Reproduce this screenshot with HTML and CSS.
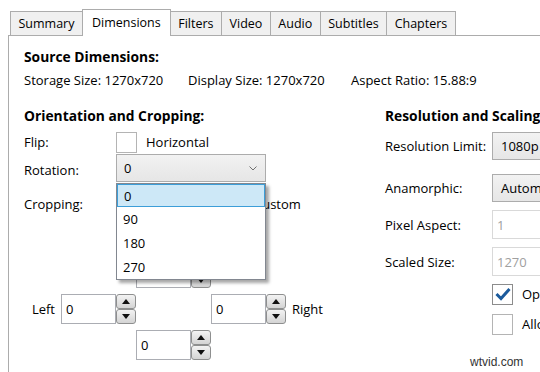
FILE: index.html
```html
<!DOCTYPE html>
<html lang="en">

<head>
  <meta charset="UTF-8">
  <title>Dimensions</title>
  <link rel="stylesheet" href="styles.css">
</head>

<body>
  <div class="tabs">
    <div class="tab">Summary</div>
    <div class="tab active">Dimensions</div>
    <div class="tab">Filters</div>
    <div class="tab">Video</div>
    <div class="tab">Audio</div>
    <div class="tab">Subtitles</div>
    <div class="tab">Chapters</div>
  </div>

  <div class="panel">
    <h2>Source Dimensions:</h2>
    <div class="source-row">
      <span class="storage">Storage Size: 1270x720</span>
      <span class="display">Display Size: 1270x720</span>
      <span>Aspect Ratio: 15.88:9</span>
    </div>

    <div class="columns">
      <div class="col-left">
        <h2>Orientation and Cropping:</h2>
        <div class="row flip-row">
          <span class="label">Flip:</span>
          <span class="check"></span>
          <span>Horizontal</span>
        </div>
        <div class="row rotation-row">
          <span class="label">Rotation:</span>
          <div class="select-wrap">
            <div class="select rotation">
              <span>0</span>
              <svg class="chevron" width="8" height="5" viewBox="0 0 8 5"><polyline points="0.5,0.5 4,4 7.5,0.5" fill="none" stroke="#707070" stroke-width="1"/></svg>
            </div>
            <ul class="dropdown">
              <li class="current">0</li>
              <li>90</li>
              <li>180</li>
              <li>270</li>
            </ul>
          </div>
        </div>
        <div class="row crop-row">
          <span class="label">Cropping:</span>
          <span class="radio-opt first"><span class="radio"></span>Automatic</span>
          <span class="radio-opt"><span class="radio"></span>Custom</span>
        </div>

        <div class="crop-grid">
          <div class="cell"></div>
          <div class="cell">
            <div class="spin"><input type="text" value="0"><div class="spin-btns"><button class="up"></button><button class="down"></button></div></div>
          </div>
          <div class="cell"></div>

          <div class="cell cell-left">
            <span>Left</span>
            <div class="spin"><input type="text" value="0"><div class="spin-btns"><button class="up"></button><button class="down"></button></div></div>
          </div>
          <div class="cell"></div>
          <div class="cell cell-right">
            <div class="spin"><input type="text" value="0"><div class="spin-btns"><button class="up"></button><button class="down"></button></div></div>
            <span>Right</span>
          </div>

          <div class="cell"></div>
          <div class="cell">
            <div class="spin"><input type="text" value="0"><div class="spin-btns"><button class="up"></button><button class="down"></button></div></div>
          </div>
        </div>
      </div>

      <div class="col-right">
        <h2>Resolution and Scaling:</h2>
        <div class="row res-row">
          <span class="label wide">Resolution Limit:</span>
          <div class="select wide-select"><span>1080p HD</span></div>
        </div>
        <div class="row ana-row">
          <span class="label wide">Anamorphic:</span>
          <div class="select wide-select"><span>Automatic</span></div>
        </div>
        <div class="row field-row">
          <span class="label wide">Pixel Aspect:</span>
          <input class="disabled" type="text" value="1" disabled>
        </div>
        <div class="row field-row scaled">
          <span class="label wide">Scaled Size:</span>
          <input class="disabled" type="text" value="1270" disabled>
        </div>
        <div class="row opt-row first">
          <span class="label wide"></span>
          <span class="check checked"><svg width="16" height="14" viewBox="0 0 16 14"><path d="M1.5 7 L6 11.5 L14.5 2" fill="none" stroke="#1b5a9c" stroke-width="3"/></svg></span>
          <span>Optimal Size</span>
        </div>
        <div class="row opt-row">
          <span class="label wide"></span>
          <span class="check"></span>
          <span>Allow Upscaling</span>
        </div>
      </div>
    </div>
  </div>

  <div class="watermark">wtvid.com</div>
</body>

</html>
```

FILE: styles.css
```css
body {
  margin: 0;
  width: 540px;
  height: 372px;
  overflow: hidden;
  background-color: white;
  font-family: 'Open Sans', 'Noto Sans', sans-serif;
  font-size: 13px;
  color: #000;
  position: relative;
}

.tabs {
  display: flex;
  align-items: flex-end;
  padding: 9px 0 0 10px;
  font-size: 12.5px;
}

.tab {
  box-sizing: border-box;
  height: 24px;
  padding: 0 7.5px;
  line-height: 23px;
  background-color: #f0f0f0;
  border: 1px solid #acacac;
  border-bottom: none;
  margin-right: -1px;
}

.tab.active {
  height: 27px;
  margin-bottom: -1px;
  line-height: 26px;
  padding: 0 9px;
  background-color: white;
  position: relative;
  z-index: 1;
}

.panel {
  margin-left: 8px;
  height: 340px;
  border-left: 1px solid #acacac;
  border-top: 1px solid #acacac;
  padding: 11px 0 0 15px;
}

h2 {
  margin: 0;
  font-size: 13.8px;
  font-weight: 700;
  line-height: 20px;
  white-space: nowrap;
}

.source-row {
  display: flex;
  margin-top: 3px;
  height: 20px;
  line-height: 20px;
  white-space: nowrap;
}
.storage {
  width: 164px;
}
.display {
  width: 163px;
}

.columns {
  display: flex;
  margin-top: 16px;
}
.col-left {
  width: 361px;
  flex-shrink: 0;
}
.col-right {
  width: 300px;
  flex-shrink: 0;
}

.row {
  display: flex;
  align-items: center;
  white-space: nowrap;
}
.label {
  width: 92px;
  flex-shrink: 0;
}
.label.wide {
  width: 107px;
}

.check {
  box-sizing: border-box;
  width: 21px;
  height: 21px;
  border: 1px solid #b4b4b4;
  background-color: white;
  margin-right: 9px;
  display: flex;
  align-items: center;
  justify-content: center;
}
.check.checked {
  border-color: #8c8c8c;
}

.flip-row {
  margin-top: 5px;
  height: 22px;
}
.rotation-row {
  margin-top: 1px;
  height: 28px;
}
.rotation-row .label {
  padding-top: 4px;
}
.crop-row {
  margin-top: 12px;
  height: 20px;
}

.select-wrap {
  position: relative;
}
.select {
  box-sizing: border-box;
  height: 28px;
  border: 1px solid #acacac;
  background: linear-gradient(#f2f2f2, #e6e6e6);
  display: flex;
  align-items: center;
  justify-content: space-between;
  padding: 0 8px 0 7px;
}
.select.rotation {
  width: 150px;
}
.chevron {
  display: block;
}

.dropdown {
  position: absolute;
  top: 29px;
  left: 0;
  z-index: 5;
  box-sizing: border-box;
  width: 150px;
  height: 97px;
  margin: 0;
  padding: 0;
  list-style: none;
  background-color: white;
  border: 1px solid #828790;
  box-shadow: 3px 3px 3px rgba(0, 0, 0, 0.35);
}
.dropdown li {
  box-sizing: border-box;
  height: 24px;
  line-height: 25px;
  padding-left: 6px;
}
.dropdown li.current {
  height: 23px;
  line-height: 22px;
  background-color: #cde8f7;
  border: 1px solid #3c9ed8;
}

.radio-opt {
  display: flex;
  align-items: center;
}
.radio-opt.first {
  width: 119px;
}
.radio {
  box-sizing: border-box;
  width: 14px;
  height: 14px;
  border: 1px solid #8c8c8c;
  border-radius: 50%;
  margin-right: 5px;
}

.crop-grid {
  margin-top: 44px;
  display: grid;
  grid-template-columns: 112px 75px auto;
  grid-auto-rows: 30px;
  row-gap: 6px;
}
.cell {
  display: flex;
  align-items: center;
  gap: 6px;
}
.cell-left {
  justify-content: flex-end;
}

.spin {
  display: flex;
  height: 30px;
}
.spin input {
  box-sizing: border-box;
  width: 55px;
  height: 30px;
  margin: 0;
  border: 1px solid #abadb3;
  padding: 0 4px;
  font: inherit;
}
.spin-btns {
  display: flex;
  flex-direction: column;
  width: 20px;
}
.spin-btns button {
  box-sizing: border-box;
  height: 15px;
  width: 20px;
  margin: 0;
  padding: 0;
  border: 1px solid #8e8f8f;
  border-radius: 3px;
  background: linear-gradient(#f3f3f3, #d4d4d4);
  display: flex;
  align-items: center;
  justify-content: center;
}
.spin-btns button::after {
  content: "";
  border-left: 4px solid transparent;
  border-right: 4px solid transparent;
}
.spin-btns .up::after {
  border-bottom: 5px solid #111;
}
.spin-btns .down::after {
  border-top: 5px solid #111;
}

.res-row {
  margin-top: 6px;
  height: 28px;
}
.ana-row {
  margin-top: 14px;
  height: 28px;
}
.wide-select {
  width: 130px;
  padding-left: 8px;
}
.field-row {
  margin-top: 8px;
  height: 29px;
}
.field-row input {
  box-sizing: border-box;
  width: 130px;
  height: 29px;
  margin: 0;
  padding: 0 4px;
  border: 1px solid #d9d9d9;
  background-color: white;
  color: #a0a0a0;
  font: inherit;
}
.opt-row {
  margin-top: 8px;
  height: 22px;
}
.opt-row.first {
  margin-top: 7px;
}

.watermark {
  position: absolute;
  left: 470px;
  top: 355px;
  font-family: 'Liberation Sans', Arial, sans-serif;
  font-size: 12px;
  color: #333;
}
```
